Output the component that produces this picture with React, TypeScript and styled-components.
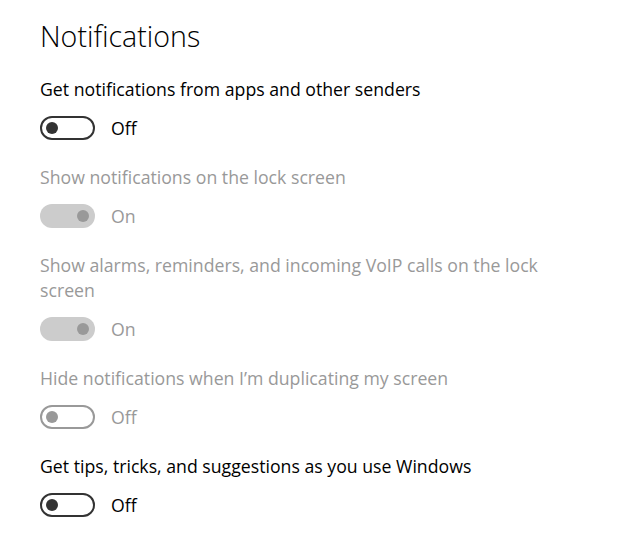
import React from "react";
import styled, { createGlobalStyle } from "styled-components";

const Global = createGlobalStyle`
  html, body { margin: 0; padding: 0; background: #ffffff; }
  body { font-family: "Open Sans", "Noto Sans", "Liberation Sans", sans-serif; }
`;

const Page = styled.div`
  width: 640px;
  height: 548px;
  box-sizing: border-box;
  padding: 18px 0 0 40px;
  background: #fff;
`;

const Title = styled.h1`
  margin: 0 0 23px 0;
  font-weight: 300;
  font-size: 28.6px;
  line-height: 36px;
  color: #000;
`;

const Setting = styled.div`
  display: flex;
  flex-direction: column;
  margin-bottom: 25px;
`;

const Label = styled.div<{ $disabled?: boolean }>`
  max-width: 530px;
  font-size: 17.7px;
  line-height: 25px;
  color: ${(p) => (p.$disabled ? "#999999" : "#000000")};
`;

const ToggleRow = styled.div`
  display: flex;
  align-items: center;
  gap: 16px;
  margin-top: 13px;
  height: 25px;
`;

const Track = styled.div<{ $on: boolean; $disabled?: boolean }>`
  box-sizing: border-box;
  width: 55px;
  height: 24px;
  border-radius: 12px;
  display: flex;
  align-items: center;
  justify-content: ${(p) => (p.$on ? "flex-end" : "flex-start")};
  border: ${(p) =>
    p.$on ? "none" : `2.5px solid ${p.$disabled ? "#999999" : "#333333"}`};
  background: ${(p) => (p.$on ? "#cccccc" : "transparent")};
  padding: ${(p) => (p.$on ? "0 6px" : "0 4px")};
`;

const Knob = styled.div<{ $disabled?: boolean }>`
  width: 12px;
  height: 12px;
  border-radius: 50%;
  background: ${(p) => (p.$disabled ? "#999999" : "#333333")};
`;

const State = styled.span<{ $disabled?: boolean }>`
  font-size: 17.7px;
  color: ${(p) => (p.$disabled ? "#999999" : "#000000")};
`;

type Item = { label: string; on: boolean; disabled: boolean };

const items: Item[] = [
  { label: "Get notifications from apps and other senders", on: false, disabled: false },
  { label: "Show notifications on the lock screen", on: true, disabled: true },
  {
    label: "Show alarms, reminders, and incoming VoIP calls on the lock screen",
    on: true,
    disabled: true,
  },
  { label: "Hide notifications when I\u2019m duplicating my screen", on: false, disabled: true },
  { label: "Get tips, tricks, and suggestions as you use Windows", on: false, disabled: false },
];

export default function App() {
  return (
    <>
      <Global />
      <Page>
        <Title>Notifications</Title>
        {items.map((it) => (
          <Setting key={it.label}>
            <Label $disabled={it.disabled}>{it.label}</Label>
            <ToggleRow>
              <Track $on={it.on} $disabled={it.disabled}>
                <Knob $disabled={it.disabled} />
              </Track>
              <State $disabled={it.disabled}>{it.on ? "On" : "Off"}</State>
            </ToggleRow>
          </Setting>
        ))}
      </Page>
    </>
  );
}
